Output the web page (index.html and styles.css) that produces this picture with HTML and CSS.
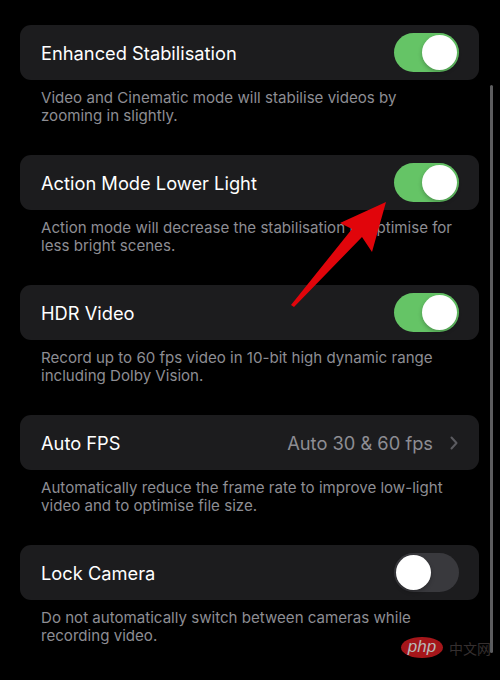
FILE: index.html
```html
<!DOCTYPE html>
<html>
<head>
<meta charset="utf-8">
<link rel="stylesheet" href="styles.css">
</head>
<body>
<div class="list">
  <section class="group">
    <div class="card">
      <span class="title">Enhanced Stabilisation</span>
      <span class="toggle on"><span class="knob"></span></span>
    </div>
    <p class="desc">Video and Cinematic mode will stabilise videos by<br>zooming in slightly.</p>
  </section>
  <section class="group">
    <div class="card">
      <span class="title">Action Mode Lower Light</span>
      <span class="toggle on"><span class="knob"></span></span>
    </div>
    <p class="desc">Action mode will decrease the stabilisation to optimise for<br>less bright scenes.</p>
  </section>
  <section class="group">
    <div class="card">
      <span class="title">HDR Video</span>
      <span class="toggle on"><span class="knob"></span></span>
    </div>
    <p class="desc">Record up to 60 fps video in 10-bit high dynamic range<br>including Dolby Vision.</p>
  </section>
  <section class="group">
    <div class="card">
      <span class="title">Auto FPS</span>
      <span class="value">Auto 30 &amp; 60 fps
        <svg class="chev" width="8" height="14" viewBox="0 0 8 14"><polyline points="1.5,1.5 6.5,7 1.5,12.5" fill="none" stroke="#5b5b60" stroke-width="2" stroke-linecap="round" stroke-linejoin="round"/></svg>
      </span>
    </div>
    <p class="desc">Automatically reduce the frame rate to improve low-light<br>video and to optimise file size.</p>
  </section>
  <section class="group">
    <div class="card">
      <span class="title">Lock Camera</span>
      <span class="toggle off"><span class="knob"></span></span>
    </div>
    <p class="desc">Do not automatically switch between cameras while<br>recording video.</p>
  </section>
</div>
<div class="scrollbar"></div>
<svg class="arrow" width="500" height="680" viewBox="0 0 500 680">
  <polygon points="386,202 372,252 362,237 294,307 291,305 352,229 340,223" fill="#e1050b"/>
</svg>
<div class="watermark"><span class="php">php</span><span class="cn">中文网</span></div>
</body>
</html>
```
FILE: styles.css
```css
html, body {
  margin: 0;
  padding: 0;
  background: #000;
  width: 500px;
  height: 680px;
  overflow: hidden;
  font-family: Inter, "Noto Sans CJK SC", sans-serif;
}
.list {
  padding: 25px 21px 0 20px;
  display: flex;
  flex-direction: column;
  gap: 30px;
}
.group {
  display: flex;
  flex-direction: column;
}
.card {
  height: 55px;
  background: #1c1c1e;
  border-radius: 11px;
  display: flex;
  align-items: center;
  justify-content: space-between;
  padding: 0 20px 0 21px;
}
.title {
  color: #fff;
  font-size: 18.3px;
  padding-top: 1px;
}
.toggle {
  width: 65px;
  height: 39px;
  border-radius: 20px;
  position: relative;
  box-sizing: border-box;
  display: flex;
  align-items: center;
  padding: 0 2px;
}
.toggle.on {
  background: #65c466;
  justify-content: flex-end;
}
.toggle.off {
  background: #39393d;
  justify-content: flex-start;
}
.knob {
  width: 35px;
  height: 35px;
  border-radius: 50%;
  background: #fff;
  box-shadow: 0 2px 4px rgba(0,0,0,0.25);
}
.value {
  color: #8d8d93;
  font-size: 18.3px;
  padding-top: 1px;
  display: flex;
  align-items: center;
  gap: 17px;
  padding-right: 1px;
}
.desc {
  margin: 0;
  padding: 9px 0 0 21px;
  color: #8d8d93;
  font-size: 15.1px;
  line-height: 18px;
}
.scrollbar {
  position: absolute;
  left: 490px;
  top: 85px;
  width: 3px;
  height: 568px;
  border-radius: 2px;
  background: #5d5d5f;
}
.arrow {
  position: absolute;
  left: 0;
  top: 0;
}
.watermark {
  position: absolute;
  left: 401px;
  top: 637px;
  display: flex;
  align-items: center;
  gap: 6px;
}
.php {
  width: 42px;
  height: 21px;
  border-radius: 50%;
  background: #a5161a;
  color: #b8b8b8;
  font-family: "Liberation Sans", sans-serif;
  font-style: italic;
  font-size: 17px;
  line-height: 19px;
  text-align: center;
}
.cn {
  color: #352f2f;
  font-size: 14px;
  font-family: "Noto Sans CJK SC", sans-serif;
}
```
